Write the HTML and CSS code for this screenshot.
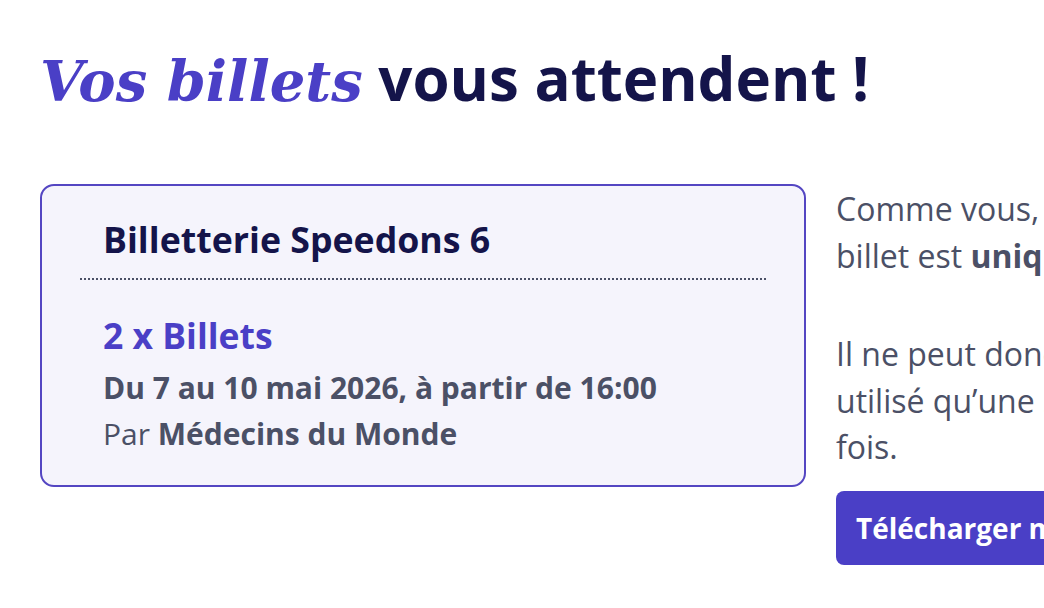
FILE: index.html
```html
<!DOCTYPE html>
<html lang="fr">
<head>
<meta charset="utf-8">
<title>Vos billets vous attendent !</title>
<link rel="stylesheet" href="styles.css">
</head>
<body>
<main class="page">
  <h1 class="title"><em class="title-accent">Vos billets</em> vous attendent !</h1>
  <div class="content">
    <section class="card">
      <div class="card-head">Billetterie Speedons 6</div>
      <div class="card-body">
        <div class="qty">2 x Billets</div>
        <div class="date">Du 7 au 10 mai 2026, à partir de 16:00</div>
        <div class="org">Par <strong>Médecins du Monde</strong></div>
      </div>
    </section>
    <aside class="side">
      <p class="side-text">Comme vous, chaque billet est <strong>unique</strong>.</p>
      <p class="side-text">Il ne peut donc être utilisé qu’une seule fois.</p>
      <button class="btn" type="button">Télécharger mes billets</button>
    </aside>
  </div>
</main>
</body>
</html>
```

FILE: styles.css
```css
html, body {
  margin: 0;
  padding: 0;
  background: #ffffff;
  overflow: hidden;
}
body {
  font-family: "Open Sans", "Noto Sans", sans-serif;
  color: #4b5066;
}
.page {
  padding: 40px 0 0 40px;
  width: 1400px;
}
.title {
  margin: 0;
  font-size: 60px;
  line-height: 76px;
  font-weight: 700;
  color: #14144a;
  letter-spacing: 0;
}
.title-accent {
  font-family: "DejaVu Serif", "Liberation Serif", serif;
  font-size: 56px;
  font-style: italic;
  font-weight: 700;
  color: #4a3fc6;
}
.content {
  display: flex;
  align-items: flex-start;
  gap: 30px;
  margin-top: 65px;
}
.card {
  width: 766px;
  box-sizing: border-box;
  border: 2px solid #5446c2;
  border-radius: 14px;
  background: #f5f4fc;
  padding: 30px 38px 28px;
}
.card-head {
  padding: 0 23px 16px;
  border-bottom: 2px dotted #4b5066;
  font-size: 35.7px;
  line-height: 46px;
  font-weight: 700;
  color: #14144a;
}
.card-body {
  padding: 32px 23px 0;
}
.qty {
  font-size: 35.5px;
  line-height: 46px;
  font-weight: 700;
  color: #4a3fc6;
  margin-bottom: 7px;
}
.date {
  font-size: 30px;
  line-height: 46px;
  font-weight: 700;
  color: #4b5066;
}
.org {
  font-size: 30px;
  line-height: 46px;
  color: #4b5066;
}
.org strong {
  font-weight: 700;
}
.side {
  width: 342px;
  padding-top: 2px;
}
.side-text {
  margin: 0 0 52px;
  font-size: 32px;
  line-height: 46.5px;
  color: #4b5066;
}
.side-text:last-of-type {
  margin-bottom: 20px;
}
.side-text strong {
  font-weight: 700;
}
.btn {
  display: block;
  white-space: nowrap;
  height: 74px;
  padding: 0 20px;
  border: none;
  border-radius: 8px;
  background: #4a3fc6;
  color: #ffffff;
  font-family: "Open Sans", "Noto Sans", sans-serif;
  font-size: 28px;
  font-weight: 700;
}
```
